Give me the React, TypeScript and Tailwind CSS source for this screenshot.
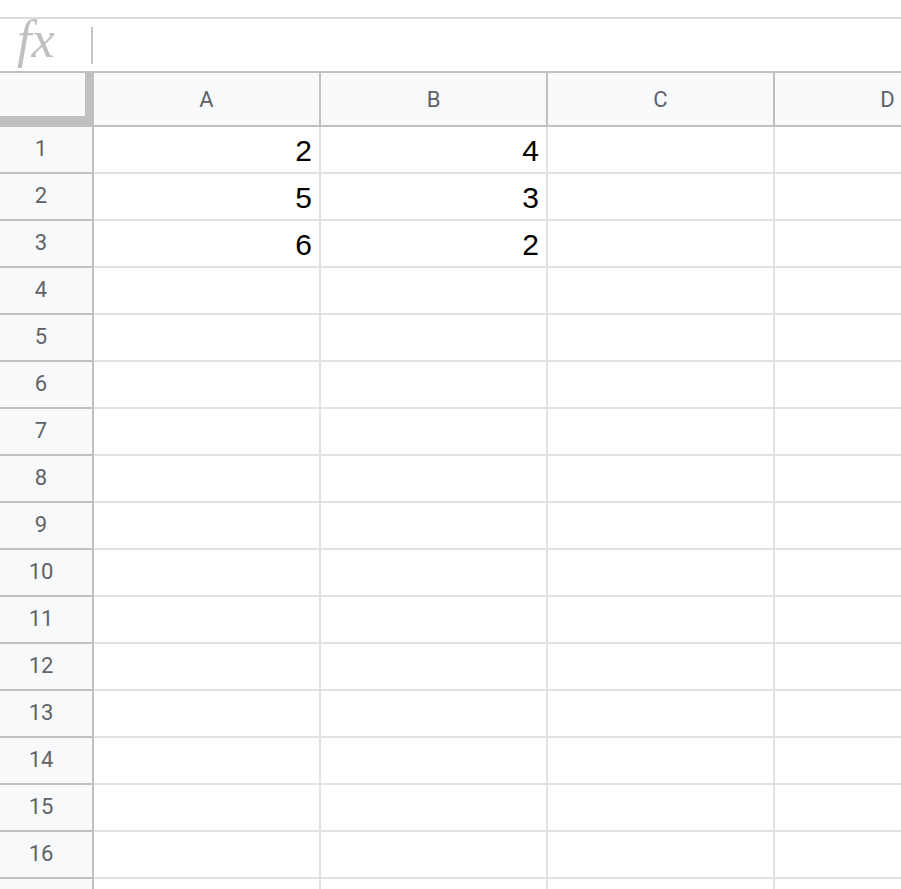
import React from "react";

const data: Record<number, [string, string]> = {
  1: ["2", "4"],
  2: ["5", "3"],
  3: ["6", "2"],
};

function DataCell({ value }: { value?: string }) {
  return (
    <div className="w-[227px] shrink-0 h-full border-r-2 border-b-2 border-[#e2e2e2] flex items-end justify-end pr-[7px] pb-[6px]">
      {value ? (
        <span className="text-[30px] leading-[30px] text-black font-['Liberation_Sans',Arial,sans-serif]">
          {value}
        </span>
      ) : null}
    </div>
  );
}

export default function App() {
  const rows = Array.from({ length: 17 }, (_, i) => i + 1);
  const cols = ["A", "B", "C", "D"];
  return (
    <div className="w-[901px] h-[889px] overflow-hidden bg-white font-['Roboto',Arial,sans-serif]">
      <div className="h-[17px]" />
      <div className="h-[54px] border-t-2 border-[#dadce0] flex items-center">
        <div className="w-[91px] shrink-0 pl-[17px] flex items-center">
          <span className="text-[52px] leading-[52px] italic text-[#c0c0c0] font-['Liberation_Serif','Times_New_Roman',serif] -mt-[10px]">
            fx
          </span>
        </div>
        <div className="w-[2px] h-[37px] bg-[#c4c4c4]" />
      </div>
      <div className="h-[56px] border-t-2 border-b-2 border-[#c0c0c0] flex">
        <div className="w-[94px] shrink-0 h-full bg-[#f8f9fa] border-r-[9px] border-b-[9px] border-[#c0c0c0]" />
        {cols.map((c) => (
          <div
            key={c}
            className="w-[227px] shrink-0 h-full bg-[#f8f9fa] border-r-2 border-[#c0c0c0] flex items-center justify-center text-[22px] text-[#5f6368]"
          >
            {c}
          </div>
        ))}
      </div>
      {rows.map((r) => (
        <div key={r} className="h-[47px] flex">
          <div className="w-[94px] shrink-0 h-full bg-[#f8f9fa] border-r-2 border-b-2 border-[#c0c0c0] flex items-center justify-center pr-[10px] pb-[2px] text-[22px] text-[#5f6368]">
            {r <= 16 ? r : null}
          </div>
          <DataCell value={data[r]?.[0]} />
          <DataCell value={data[r]?.[1]} />
          <DataCell />
          <DataCell />
        </div>
      ))}
    </div>
  );
}
